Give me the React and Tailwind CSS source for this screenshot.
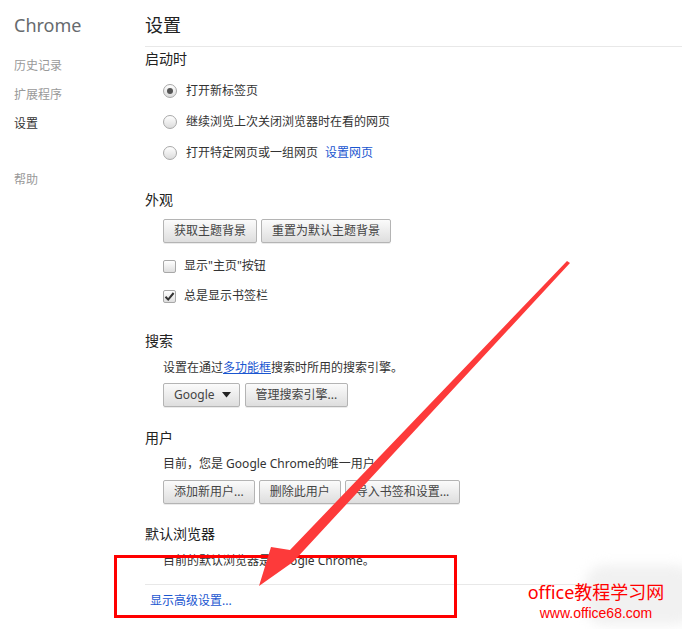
import React from 'react'

const font = { fontFamily: '"Noto Sans", "Noto Sans CJK SC", sans-serif' }

function Radio({ checked, children }) {
  return (
    <div className="flex h-[31px] items-center">
      <span className="flex h-[14px] w-[14px] items-center justify-center rounded-full border border-[#a8a8a8] bg-gradient-to-b from-[#ffffff] to-[#dcdcdc]">
        {checked && <span className="h-[6px] w-[6px] rounded-full bg-[#555]" />}
      </span>
      <span className="ml-[9px] text-[12px] leading-[20px] text-[#333]">{children}</span>
    </div>
  )
}

function Check({ checked, children }) {
  return (
    <div className="flex h-[30px] items-center">
      <span className="flex h-[13px] w-[13px] items-center justify-center rounded-[2px] border border-[#a8a8a8] bg-gradient-to-b from-[#ffffff] to-[#dedede]">
        {checked && (
          <svg width="11" height="11" viewBox="0 0 11 11">
            <path d="M1.5 5.8 L4.2 8.6 L9.6 2" fill="none" stroke="#333" strokeWidth="2" />
          </svg>
        )}
      </span>
      <span className="ml-[8px] text-[12px] leading-[20px] text-[#333]">{children}</span>
    </div>
  )
}

function Btn({ children, className = '' }) {
  return (
    <button className={`flex h-[24px] items-center rounded-[2px] border border-[#b4b4b4] bg-gradient-to-b from-[#fbfbfb] to-[#dedede] text-[12px] leading-[20px] text-[#444] shadow-[0_1px_0_rgba(0,0,0,0.08)] ${className || 'px-[10px]'}`}>
      {children}
    </button>
  )
}

function Heading({ children, className = '' }) {
  return <div className={`h-[20px] text-[14px] leading-[20px] text-[#222] ${className}`}>{children}</div>
}

export default function App() {
  return (
    <div className="relative h-[629px] w-[682px] overflow-hidden bg-white" style={font}>
      <div className="flex">
        {/* Sidebar */}
        <div className="w-[145px] shrink-0 px-[14px]">
          <div className="pt-[13px] text-[18px] leading-[24px] text-[#666a6e]">Chrome</div>
          <div className="mt-[19px] flex flex-col text-[12px] leading-[20px]">
            <span className="text-[#999]">历史记录</span>
            <span className="mt-[9px] text-[#999]">扩展程序</span>
            <span className="mt-[9px] text-[#333]">设置</span>
            <span className="mt-[36px] text-[#999]">帮助</span>
          </div>
        </div>

        {/* Main */}
        <div className="flex-1">
          <div className="h-[47px] border-b border-[#e8e8e8] pt-[14px] text-[18px] leading-[22px] text-[#222]">设置</div>

          <Heading className="mt-[2px]">启动时</Heading>
          <div className="ml-[18px] mt-[6px]">
            <Radio checked>打开新标签页</Radio>
            <Radio>继续浏览上次关闭浏览器时在看的网页</Radio>
            <Radio>
              打开特定网页或一组网页<span className="ml-[7px] text-[#1a56d0]">设置网页</span>
            </Radio>
          </div>

          <Heading className="mt-[22px]">外观</Heading>
          <div className="ml-[18px] mt-[9px] flex gap-[4px]">
            <Btn>获取主题背景</Btn>
            <Btn>重置为默认主题背景</Btn>
          </div>
          <div className="ml-[18px] mt-[8px]">
            <Check>显示"主页"按钮</Check>
            <Check checked>总是显示书签栏</Check>
          </div>

          <Heading className="mt-[20px]">搜索</Heading>
          <div className="ml-[18px] mt-[7px] h-[20px] text-[12px] leading-[20px] text-[#333]">
            设置在通过<span className="text-[#1a56d0] underline">多功能框</span>搜索时所用的搜索引擎。
          </div>
          <div className="ml-[18px] mt-[5px] flex gap-[5px]">
            <Btn className="pl-[10px] pr-[8px]">
              Google
              <svg className="ml-[7px]" width="9" height="6" viewBox="0 0 9 6">
                <path d="M0 0 H9 L4.5 5.5 Z" fill="#222" />
              </svg>
            </Btn>
            <Btn>管理搜索引擎...</Btn>
          </div>

          <Heading className="mt-[21px]">用户</Heading>
          <div className="ml-[18px] mt-[6px] h-[20px] text-[12px] leading-[20px] text-[#333]">
            目前，您是 Google Chrome的唯一用户
          </div>
          <div className="ml-[18px] mt-[6px] flex gap-[4px]">
            <Btn>添加新用户...</Btn>
            <Btn>删除此用户</Btn>
            <Btn>导入书签和设置...</Btn>
          </div>

          <Heading className="mt-[20px]">默认浏览器</Heading>
          <div className="ml-[18px] mt-[7px] h-[20px] text-[12px] leading-[20px] text-[#333]">
            目前的默认浏览器是 Google Chrome。
          </div>
          <div className="mt-[13px] border-t border-[#e8e8e8]" />
          <div className="ml-[5px] mt-[6px] text-[12px] leading-[20px] text-[#1a56d0]">显示高级设置...</div>
        </div>
      </div>

      {/* Watermark */}
      <div className="absolute left-[585px] top-[565px] h-[60px] w-[110px] rounded-[20px] bg-[#f1f1f1] blur-[6px]" />
      <div className="absolute left-[526px] top-[579px] flex w-[140px] flex-col items-center">
        <span className="text-[18px] leading-[26px] text-[#ff0000]">office教程学习网</span>
        <span className="text-[14px] leading-[16px] text-[#ff0000]" style={{ fontFamily: '"Liberation Sans", sans-serif' }}>www.office68.com</span>
      </div>

      {/* Annotation */}
      <div className="absolute left-[114px] top-[555px] h-[63px] w-[343px] border-[3px] border-[#ff0000]" />
      <svg className="absolute left-0 top-0" width="682" height="629" viewBox="0 0 682 629">
        <polygon points="567,261 570,263 293,562 259,586 271,547 290,550" fill="#fd3a3a" />
      </svg>
    </div>
  )
}
